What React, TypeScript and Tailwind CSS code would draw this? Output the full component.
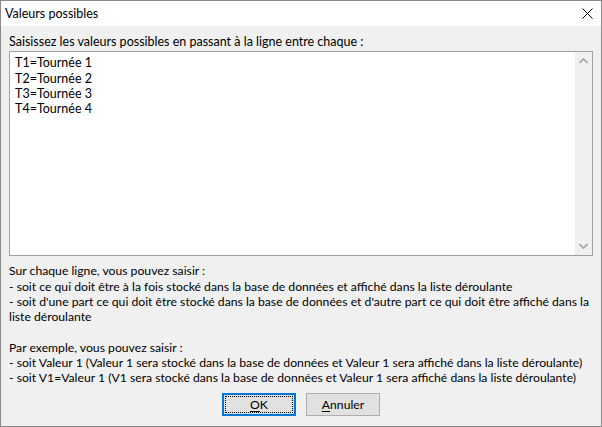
import React from "react"

const font = { fontFamily: 'Lato, "Liberation Sans", sans-serif' }

function Chevron({ up }: { up?: boolean }) {
  return (
    <svg width="9" height="6" viewBox="0 0 9 6" className="text-[#a3a3a3]">
      <path
        d={up ? "M0.5 5 L4.5 1 L8.5 5" : "M0.5 1 L4.5 5 L8.5 1"}
        fill="none"
        stroke="currentColor"
        strokeWidth={1.6}
      />
    </svg>
  )
}

export default function App() {
  const values = ["T1=Tournée 1", "T2=Tournée 2", "T3=Tournée 3", "T4=Tournée 4"]

  return (
    <div
      className="w-[602px] h-[427px] border border-[#8a8a8a] bg-[#f0f0f0] flex flex-col text-[12.2px] leading-[15.3px] text-black overflow-hidden"
      style={font}
    >
      {/* Title bar */}
      <div className="h-[25px] bg-white flex items-center justify-between pl-[4px] pr-[8px] shrink-0">
        <span className="text-[12.5px]">Valeurs possibles</span>
        <svg width="11" height="11" viewBox="0 0 11 11">
          <path d="M0.5 0.5 L10.5 10.5 M10.5 0.5 L0.5 10.5" stroke="#000" strokeWidth={1} />
        </svg>
      </div>

      {/* Body */}
      <div className="flex flex-col px-[8px] pt-[8px]">
        <div className="text-[12.5px]">Saisissez les valeurs possibles en passant à la ligne entre chaque :</div>

        {/* Text area */}
        <div className="mt-[2px] h-[205px] border border-[#a0a0a0] bg-white flex">
          <div className="flex-1 pl-[5px] pt-[3px] text-[12.5px]">
            {values.map((v) => (
              <div key={v}>{v}</div>
            ))}
          </div>
          <div className="w-[17px] bg-[#f0f0f0] flex flex-col items-center justify-between py-[6px]">
            <Chevron up />
            <Chevron />
          </div>
        </div>

        {/* Help text */}
        <div className="mt-[7px] whitespace-nowrap">
          <div>Sur chaque ligne, vous pouvez saisir :</div>
          <div>- soit ce qui doit être à la fois stocké dans la base de données et affiché dans la liste déroulante</div>
          <div>- soit d'une part ce qui doit être stocké dans la base de données et d'autre part ce qui doit être affiché dans la</div>
          <div>liste déroulante</div>
          <div>&nbsp;</div>
          <div>Par exemple, vous pouvez saisir :</div>
          <div>- soit Valeur 1 (Valeur 1 sera stocké dans la base de données et Valeur 1 sera affiché dans la liste déroulante)</div>
          <div>- soit V1=Valeur 1 (V1 sera stocké dans la base de données et Valeur 1 sera affiché dans la liste déroulante)</div>
        </div>

        {/* Buttons */}
        <div className="mt-[7px] flex justify-center gap-[10px]">
          <button className="w-[74px] h-[23px] border-2 border-[#0078d7] bg-[#e1e1e1] p-[1px]">
            <span className="flex items-center justify-center w-full h-full border border-dotted border-black">
              <span className="underline underline-offset-2">O</span>K
            </span>
          </button>
          <button className="w-[74px] h-[23px] border border-[#adadad] bg-[#e1e1e1] flex items-center justify-center">
            <span className="underline underline-offset-2">A</span>nnuler
          </button>
        </div>
      </div>
    </div>
  )
}
